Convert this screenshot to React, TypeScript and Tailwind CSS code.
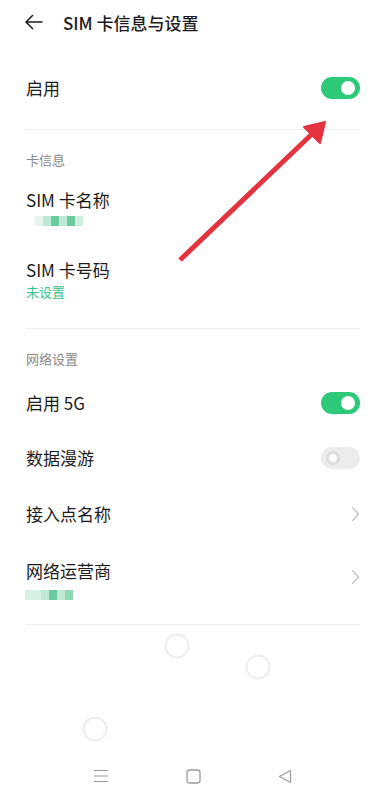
import React from 'react';

const FONT = { fontFamily: '"Noto Sans CJK SC", "Noto Sans", sans-serif' };

const Toggle = ({ on }: { on: boolean }) =>
  on ? (
    <div className="w-[39px] h-[22px] rounded-full bg-[#2dc978] flex items-center justify-end pr-[5px]">
      <div className="w-[14px] h-[14px] rounded-full bg-white" />
    </div>
  ) : (
    <div className="w-[39px] h-[22px] rounded-full bg-[#ececec] flex items-center pl-[5px]">
      <div className="w-[14px] h-[14px] rounded-full border-[3px] border-[#dcdcdc] bg-white" />
    </div>
  );

const Chevron = () => (
  <svg width="9" height="16" viewBox="0 0 9 16" className="shrink-0">
    <path d="M1.5 1.5 L7.5 8 L1.5 14.5" fill="none" stroke="#c4c4c4" strokeWidth="1.3" strokeLinecap="round" strokeLinejoin="round" />
  </svg>
);

// pixelated blur standing in for a hidden value
const Blur = ({ cells }: { cells: string[] }) => (
  <div className="flex h-[10px]">
    {cells.map((c, i) => (
      <div key={i} className="w-[8px] h-[10px]" style={{ backgroundColor: c }} />
    ))}
  </div>
);

const Divider = () => <div className="h-px bg-[#eeeeee]" />;

export default function App() {
  return (
    <div className="relative w-[386px] h-[800px] bg-white text-[#1c1c1c] overflow-hidden flex flex-col" style={FONT}>
      {/* header */}
      <div className="h-[44px] flex items-center pl-[24px]">
        <svg width="19" height="16" viewBox="0 0 19 16">
          <path d="M18 8 H2 M8.5 1.5 L2 8 L8.5 14.5" fill="none" stroke="#1c1c1c" strokeWidth="1.5" strokeLinecap="round" strokeLinejoin="round" />
        </svg>
        <span className="ml-[20px] text-[17px] font-medium leading-none">SIM 卡信息与设置</span>
      </div>

      <div className="px-[26px] flex flex-col">
        <div className="mt-[16px] h-[56px] flex items-center justify-between">
          <span className="text-[17px]">启用</span>
          <Toggle on />
        </div>
        <div className="pt-[13px] pb-[12px]">
          <Divider />
        </div>

        <div className="h-[36px] flex items-center text-[13px] text-[#8a8a8a]">卡信息</div>

        <div className="h-[66px] flex flex-col pt-[9px]">
          <span className="text-[17px] leading-[26px]">SIM 卡名称</span>
          <div className="mt-[3px] ml-[9px]">
            <Blur cells={['#e4f6ee', '#bfe9d4', '#6ccaa0', '#bfe9d4', '#6ccaa0', '#cfeee0']} />
          </div>
        </div>

        <div className="h-[66px] flex flex-col pt-[13px]">
          <span className="text-[17px] leading-[26px]">SIM 卡号码</span>
          <span className="text-[13px] leading-[20px] text-[#3cbf88] -mt-[1px]">未设置</span>
        </div>

        <div className="pt-[18px] pb-[13px]">
          <Divider />
        </div>

        <div className="h-[34px] flex items-center text-[13px] text-[#8a8a8a]">网络设置</div>

        <div className="h-[54px] flex items-center justify-between">
          <span className="text-[17px]">启用 5G</span>
          <Toggle on />
        </div>
        <div className="h-[56px] flex items-center justify-between">
          <span className="text-[17px]">数据漫游</span>
          <Toggle on={false} />
        </div>
        <div className="h-[56px] flex items-center justify-between">
          <span className="text-[17px]">接入点名称</span>
          <Chevron />
        </div>
        <div className="h-[70px] flex items-center justify-between">
          <div className="flex flex-col pt-[3px]">
            <span className="text-[17px] leading-[26px]">网络运营商</span>
            <div className="mt-[6px] -ml-[1px]">
              <Blur cells={['#d6f2e5', '#d6f2e5', '#bfe9d4', '#6ccaa0', '#bfe9d4', '#8fd8b6']} />
            </div>
          </div>
          <Chevron />
        </div>
        <div className="pt-[12px]">
          <Divider />
        </div>
      </div>

      {/* nav bar */}
      <div className="mt-auto h-[48px] flex items-center justify-center gap-[77px] pr-[1px]">
        <svg width="16" height="14" viewBox="0 0 16 14">
          <path d="M1 1.5 H15 M1 7 H15 M1 12.5 H15" stroke="#9a9a9a" strokeWidth="1.2" />
        </svg>
        <svg width="15" height="15" viewBox="0 0 15 15">
          <rect x="1" y="1" width="13" height="13" rx="2.5" fill="none" stroke="#9a9a9a" strokeWidth="1.3" />
        </svg>
        <svg width="14" height="15" viewBox="0 0 14 15">
          <path d="M12.5 1.5 V13.5 L1.5 7.5 Z" fill="none" stroke="#9a9a9a" strokeWidth="1.2" strokeLinejoin="round" />
        </svg>
      </div>

      {/* overlays: annotation arrow and touch rings */}
      <svg className="absolute inset-0 pointer-events-none" width="386" height="800" viewBox="0 0 386 800">
        <line x1="180" y1="260" x2="312" y2="134" stroke="#e5323f" strokeWidth="5" strokeLinecap="butt" />
        <path d="M325 122 L304 127 L320 143 Z" fill="#e5323f" stroke="#e5323f" strokeWidth="2" strokeLinejoin="round" />
        <circle cx="177" cy="646" r="11.5" fill="none" stroke="#ededed" strokeWidth="2" />
        <circle cx="258" cy="667" r="11.5" fill="none" stroke="#ededed" strokeWidth="2" />
        <circle cx="95" cy="729" r="11.5" fill="none" stroke="#ededed" strokeWidth="2" />
      </svg>
    </div>
  );
}
